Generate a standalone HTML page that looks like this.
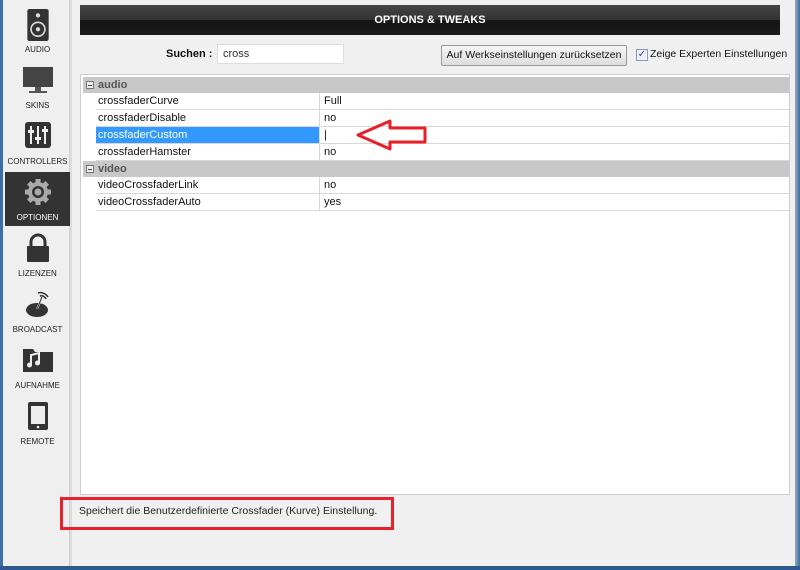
<!DOCTYPE html>
<html><head><meta charset="utf-8"><style>
*{margin:0;padding:0;box-sizing:border-box}
body{width:800px;height:570px;overflow:hidden;background:#f0f0f0;font-family:"Liberation Sans",sans-serif;position:relative;font-size:11px;color:#111}
.abs{position:absolute}
#lb{left:0;top:0;width:3px;height:570px;background:#3a6ea5}
#rb{right:0;top:0;width:5px;height:570px;background:linear-gradient(90deg,#9ab,#3a6ea5)}
#bb{left:0;bottom:0;width:800px;height:4px;background:#2d5a8a}
#side{left:3px;top:0;width:67px;height:566px;background:#efefef;border-right:1px solid #d0d0d0}
.it{position:absolute;left:2px;width:65px;height:54px;text-align:center;font-size:8px;color:#222}
.it svg{display:block;margin:5px auto 0}
.it span{position:absolute;left:0;right:0;bottom:4px}
.sel{background:#333;color:#fff}
#hdr{left:80px;top:5px;width:700px;height:30px;background:linear-gradient(#444 0,#333 50%,#151515 51%,#1a1a1a);color:#fff;font-weight:bold;font-size:11px;text-align:center;line-height:30px}
#tbl{left:80px;top:74px;width:710px;height:421px;background:#fff;border:1px solid #ccc}
.g{position:absolute;left:2px;width:706px;height:16px;background:#c8c8c8;color:#555;font-weight:bold;font-size:11px;line-height:16px;padding-left:15px}
.g i{position:absolute;left:3px;top:4px;width:8px;height:8px;border:1px solid #777;background:#eee}
.g i:after{content:"";position:absolute;left:1px;top:3px;width:4px;height:1px;background:#444}
.r{position:absolute;left:15px;width:693px;height:17px;border-bottom:1px solid #d8d8d8;line-height:16px}
.r b{font-weight:normal;position:absolute;left:0;width:224px;padding-left:2px;height:16px;border-right:1px solid #d8d8d8}
.r em{font-style:normal;position:absolute;left:228px}
</style></head><body>
<div class="abs" id="lb"></div><div class="abs" id="rb"></div><div class="abs" id="bb"></div>
<div class="abs" id="side">
 <div class="it" style="top:4px"><svg width="22" height="32" viewBox="0 0 20 30"><rect width="20" height="30" rx="2" fill="#333"/><circle cx="10" cy="6" r="2" fill="#ddd"/><circle cx="10" cy="19" r="6.5" fill="none" stroke="#ddd" stroke-width="1.5"/><circle cx="10" cy="19" r="2" fill="#ddd"/></svg><span>AUDIO</span></div>
 <div class="it" style="top:60px"><svg width="32" height="30" viewBox="0 0 32 30"><rect x="1" y="2" width="30" height="20" fill="#444"/><rect x="13" y="22" width="6" height="4" fill="#555"/><rect x="7" y="26" width="18" height="2" fill="#555"/></svg><span>SKINS</span></div>
 <div class="it" style="top:116px"><svg width="28" height="30" viewBox="0 0 28 30"><rect x="1" y="1" width="26" height="26" rx="3" fill="#333"/><g stroke="#eee" stroke-width="2"><path d="M7 5v18M14 5v18M21 5v18"/></g><g fill="#eee"><rect x="4" y="9" width="6" height="3"/><rect x="11" y="16" width="6" height="3"/><rect x="18" y="8" width="6" height="3"/></g></svg><span>CONTROLLERS</span></div>
 <div class="it sel" style="top:172px"><svg width="30" height="30" viewBox="0 0 30 30"><g fill="#aaa"><circle cx="15" cy="15" r="10"/><g stroke="#aaa" stroke-width="5"><path d="M15 2v26M2 15h26M5.8 5.8l18.4 18.4M24.2 5.8L5.8 24.2"/></g></g><circle cx="15" cy="15" r="6" fill="#333"/><circle cx="15" cy="15" r="3.5" fill="#aaa"/></svg><span>OPTIONEN</span></div>
 <div class="it" style="top:228px"><svg width="24" height="30" viewBox="0 0 24 30"><path d="M5 14V9a7 7 0 0 1 14 0v5" fill="none" stroke="#333" stroke-width="3"/><rect x="1" y="13" width="22" height="16" rx="1" fill="#333"/></svg><span>LIZENZEN</span></div>
 <div class="it" style="top:284px"><svg width="30" height="30" viewBox="0 0 30 30"><ellipse cx="14" cy="21" rx="11" ry="7" fill="#333"/><path d="M14 20l5-12" stroke="#eee" stroke-width="2"/><path d="M14 20l5-12" stroke="#333" stroke-width="1"/><path d="M15 4a9 9 0 0 1 10 4M17 7a5 5 0 0 1 6 3" fill="none" stroke="#333" stroke-width="1.5"/></svg><span>BROADCAST</span></div>
 <div class="it" style="top:340px"><svg width="32" height="28" viewBox="0 0 32 28"><path d="M1 4h10l2 3h18v20H1z" fill="#333"/><path d="M9 20V10l8-2v10" stroke="#eee" stroke-width="2" fill="none"/><circle cx="7.5" cy="20" r="2.5" fill="#eee"/><circle cx="15.5" cy="18" r="2.5" fill="#eee"/></svg><span>AUFNAHME</span></div>
 <div class="it" style="top:396px"><svg width="20" height="30" viewBox="0 0 20 30"><rect x="0" y="1" width="20" height="28" rx="2" fill="#333"/><rect x="3" y="5" width="14" height="18" fill="#eee"/><circle cx="10" cy="26" r="1.3" fill="#eee"/></svg><span>REMOTE</span></div>
</div>
<div class="abs" style="left:70px;top:0;width:2px;height:566px;background:#ddd"></div>
<div class="abs" id="hdr">OPTIONS &amp; TWEAKS</div>
<div class="abs" style="left:166px;top:48px;font-weight:bold;font-size:11px">Suchen :</div>
<div class="abs" style="left:217px;top:44px;width:127px;height:20px;background:#fff;border:1px solid #ddd;line-height:18px;padding-left:5px;color:#333">cross</div>
<div class="abs" style="left:441px;top:45px;width:186px;height:21px;border:1px solid #999;border-radius:2px;background:linear-gradient(#f6f6f6,#ddd);text-align:center;line-height:19px;font-size:10.5px">Auf Werkseinstellungen zurücksetzen</div>
<div class="abs" style="left:636px;top:49px;width:12px;height:12px;border:1px solid #8a9ab0;background:#eef;color:#2a4a9a;font-size:10px;line-height:10px;text-align:center">✓</div>
<div class="abs" style="left:650px;top:48px;font-size:10.5px">Zeige Experten Einstellungen</div>
<div class="abs" id="tbl">
 <div class="g" style="top:2px"><i></i>audio</div>
 <div class="r" style="top:18px"><b>crossfaderCurve</b><em>Full</em></div>
 <div class="r" style="top:35px"><b>crossfaderDisable</b><em>no</em></div>
 <div class="r" style="top:52px"><b style="background:#3399ff;color:#fff">crossfaderCustom</b><em>|</em></div>
 <div class="r" style="top:69px"><b>crossfaderHamster</b><em>no</em></div>
 <div class="g" style="top:86px"><i></i>video</div>
 <div class="r" style="top:102px"><b>videoCrossfaderLink</b><em>no</em></div>
 <div class="r" style="top:119px"><b>videoCrossfaderAuto</b><em>yes</em></div>
</div>
<svg class="abs" style="left:350px;top:118px" width="82" height="34"><path d="M8 17L40 3v7h35v14H40v7z" fill="none" stroke="#e8202a" stroke-width="3" stroke-linejoin="round"/></svg>
<div class="abs" style="left:60px;top:497px;width:334px;height:33px;border:3px solid #e8202a"></div>
<div class="abs" style="left:79px;top:505px;font-size:10.5px;color:#222">Speichert die Benutzerdefinierte Crossfader (Kurve) Einstellung.</div>
</body></html>
